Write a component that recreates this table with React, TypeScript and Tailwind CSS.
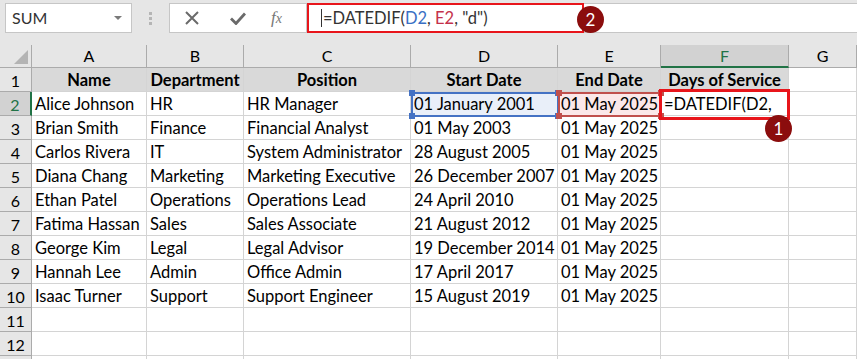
import React from "react";

const cols = ["A", "B", "C", "D", "E", "F", "G"];
const widths = "grid-cols-[32px_115px_97px_167px_147px_103px_128px_68px]";

const rows = [
  ["Alice Johnson", "HR", "HR Manager", "01 January 2001", "01 May 2025"],
  ["Brian Smith", "Finance", "Financial Analyst", "01 May 2003", "01 May 2025"],
  ["Carlos Rivera", "IT", "System Administrator", "28 August 2005", "01 May 2025"],
  ["Diana Chang", "Marketing", "Marketing Executive", "26 December 2007", "01 May 2025"],
  ["Ethan Patel", "Operations", "Operations Lead", "24 April 2010", "01 May 2025"],
  ["Fatima Hassan", "Sales", "Sales Associate", "21 August 2012", "01 May 2025"],
  ["George Kim", "Legal", "Legal Advisor", "19 December 2014", "01 May 2025"],
  ["Hannah Lee", "Admin", "Office Admin", "17 April 2017", "01 May 2025"],
  ["Isaac Turner", "Support", "Support Engineer", "15 August 2019", "01 May 2025"],
  ["", "", "", "", ""],
  ["", "", "", "", ""],
  ["", "", "", "", ""],
];

const Badge = ({ n }: { n: number }) => (
  <div className="w-[27px] h-[27px] rounded-full bg-[#8b0d0d] text-white flex items-center justify-center text-[17px] leading-none">
    {n}
  </div>
);

const Handle = ({ className }: { className: string }) => (
  <div className={`absolute w-[6px] h-[6px] ${className}`} />
);

export default function App() {
  return (
    <div className="w-[857px] h-[359px] overflow-hidden bg-white font-['Lato',sans-serif] text-[16.5px] text-black relative">
      {/* TOOLBAR */}
      <div className="h-[45px] bg-[#e6e6e6] flex items-start pt-[3px] pl-[5px]">
        <div className="w-[127px] h-[30px] bg-white border border-[#c6c6c6] flex items-center justify-between pl-[6px] pr-[9px] text-[#333]">
          <span className="text-[16px]">SUM</span>
          <span className="w-0 h-0 border-l-[4px] border-r-[4px] border-t-[4px] border-l-transparent border-r-transparent border-t-[#7a7a7a]" />
        </div>
        <div className="w-[37px] h-[30px] flex flex-col items-center justify-center gap-[2px]">
          <span className="w-[3px] h-[3px] bg-[#b5b5b5]" />
          <span className="w-[3px] h-[3px] bg-[#b5b5b5]" />
          <span className="w-[3px] h-[3px] bg-[#b5b5b5]" />
        </div>
        <div className="w-[138px] h-[30px] bg-white border border-[#c6c6c6] flex items-center text-[#6a6a6a]">
          <svg className="ml-[15px]" width="14" height="14" viewBox="0 0 14 14">
            <path d="M1 1 L13 13 M13 1 L1 13" stroke="#6a6a6a" strokeWidth="2" />
          </svg>
          <svg className="ml-[31px]" width="16" height="13" viewBox="0 0 16 13">
            <path d="M1 6.5 L6 11.5 L15 1.5" stroke="#6a6a6a" strokeWidth="2.8" fill="none" />
          </svg>
          <span className="ml-[25px] font-['Liberation_Serif',serif] italic text-[17px] text-[#777]">
            f<span className="text-[14px]">x</span>
          </span>
        </div>
        <div className="flex-1 h-[30px] bg-white border-t border-b border-[#c6c6c6] relative">
          <div className="absolute left-0 top-[-1px] w-[277px] h-[30px] border-2 border-[#e8151b] flex items-center pl-[12px] text-[#333]">
            <span className="w-[1px] h-[18px] bg-[#333] mr-[1px]" />
            <span>=DATEDIF(</span>
            <span className="text-[#3a6fc4]">D2</span>
            <span>,&nbsp;</span>
            <span className="text-[#c4314b]">E2</span>
            <span>, "d")</span>
          </div>
          <div className="absolute left-[270px] top-[2px]">
            <Badge n={2} />
          </div>
        </div>
      </div>

      {/* SHEET */}
      <div className={`grid ${widths}`}>
        {/* column headers */}
        <div className="h-[23px] bg-[#e6e6e6] border-r border-b border-[#ababab] flex items-end justify-end pr-[3px] pb-[3px]">
          <svg width="14" height="14" viewBox="0 0 14 14">
            <path d="M14 0 L14 14 L0 14 Z" fill="#b4b4b4" />
          </svg>
        </div>
        {cols.map((c) =>
          c === "F" ? (
            <div key={c} className="h-[23px] bg-[#d2d2d2] border-r border-[#ababab] border-b-2 border-b-[#217346] flex items-center justify-center text-[#217346] text-[16px]">
              {c}
            </div>
          ) : (
            <div key={c} className="h-[23px] bg-[#e6e6e6] border-r border-b border-[#ababab] flex items-center justify-center text-[16px]">
              {c}
            </div>
          )
        )}

        {/* row 1 headers */}
        <div className="h-[24px] bg-[#e6e6e6] border-r border-b border-[#ababab] flex items-center justify-center text-[16px] pt-[2px]">1</div>
        {["Name", "Department", "Position", "Start Date", "End Date", "Days of Service"].map((t) => (
          <div key={t} className="h-[24px] bg-[#d9d9d9] border-r border-b border-[#d4d4d4] flex items-center justify-center font-bold whitespace-nowrap overflow-hidden pt-[2px]">
            {t}
          </div>
        ))}
        <div className="h-[24px] border-r border-b border-[#d4d4d4]" />

        {rows.map((r, i) => {
          const n = i + 2;
          const sel = n === 2;
          return (
            <React.Fragment key={n}>
              <div
                className={`h-[24px] flex items-center justify-center text-[16px] pt-[2px] border-b border-[#ababab] ${
                  sel ? "bg-[#d2d2d2] text-[#217346] border-r-2 border-r-[#217346]" : "bg-[#e6e6e6] border-r"
                }`}
              >
                {n}
              </div>
              {r.map((v, j) => (
                <div
                  key={j}
                  className={`h-[24px] border-r border-b border-[#d4d4d4] flex items-center pl-[3px] pt-[2px] whitespace-nowrap overflow-hidden ${
                    sel && j === 3 ? "bg-[#e9eff9]" : sel && j === 4 ? "bg-[#fbe8e9]" : ""
                  }`}
                >
                  {v}
                </div>
              ))}
              <div className="h-[24px] border-r border-b border-[#d4d4d4] flex items-center pl-[3px] pt-[2px] whitespace-nowrap">
                {sel ? "=DATEDIF(D2," : ""}
              </div>
              <div className="h-[24px] border-r border-b border-[#d4d4d4]" />
            </React.Fragment>
          );
        })}

        {/* row 13, cut by the window */}
        <div className="h-[24px] bg-[#e6e6e6] border-r border-[#ababab]" />
        <div className="h-[24px] border-r border-[#d4d4d4]" />
        <div className="h-[24px] border-r border-[#d4d4d4]" />
        <div className="h-[24px] border-r border-[#d4d4d4]" />
        <div className="h-[24px] border-r border-[#d4d4d4]" />
        <div className="h-[24px] border-r border-[#d4d4d4]" />
        <div className="h-[24px] border-r border-[#d4d4d4]" />
        <div className="h-[24px] border-r border-[#d4d4d4]" />
      </div>

      {/* D2 reference highlight */}
      <div className="absolute left-[411px] top-[92px] w-[148px] h-[25px] border-2 border-[#4472c4]">
        <Handle className="bg-[#4472c4] left-[-4px] top-[-4px]" />
        <Handle className="bg-[#4472c4] right-[-4px] top-[-4px]" />
        <Handle className="bg-[#4472c4] left-[-4px] bottom-[-4px]" />
        <Handle className="bg-[#4472c4] right-[-4px] bottom-[-4px]" />
      </div>
      {/* E2 reference highlight */}
      <div className="absolute left-[558px] top-[92px] w-[104px] h-[25px] border-2 border-[#c0504d]">
        <Handle className="bg-[#c0504d] left-[-4px] top-[-4px]" />
        <Handle className="bg-[#c0504d] right-[-4px] top-[-4px]" />
        <Handle className="bg-[#c0504d] left-[-4px] bottom-[-4px]" />
        <Handle className="bg-[#c0504d] right-[-4px] bottom-[-4px]" />
      </div>
      {/* F2 annotation */}
      <div className="absolute left-[659px] top-[89px] w-[131px] h-[31px] border-[3px] border-[#e8151b]" />
      <div className="absolute left-[765px] top-[115px]">
        <Badge n={1} />
      </div>
    </div>
  );
}
